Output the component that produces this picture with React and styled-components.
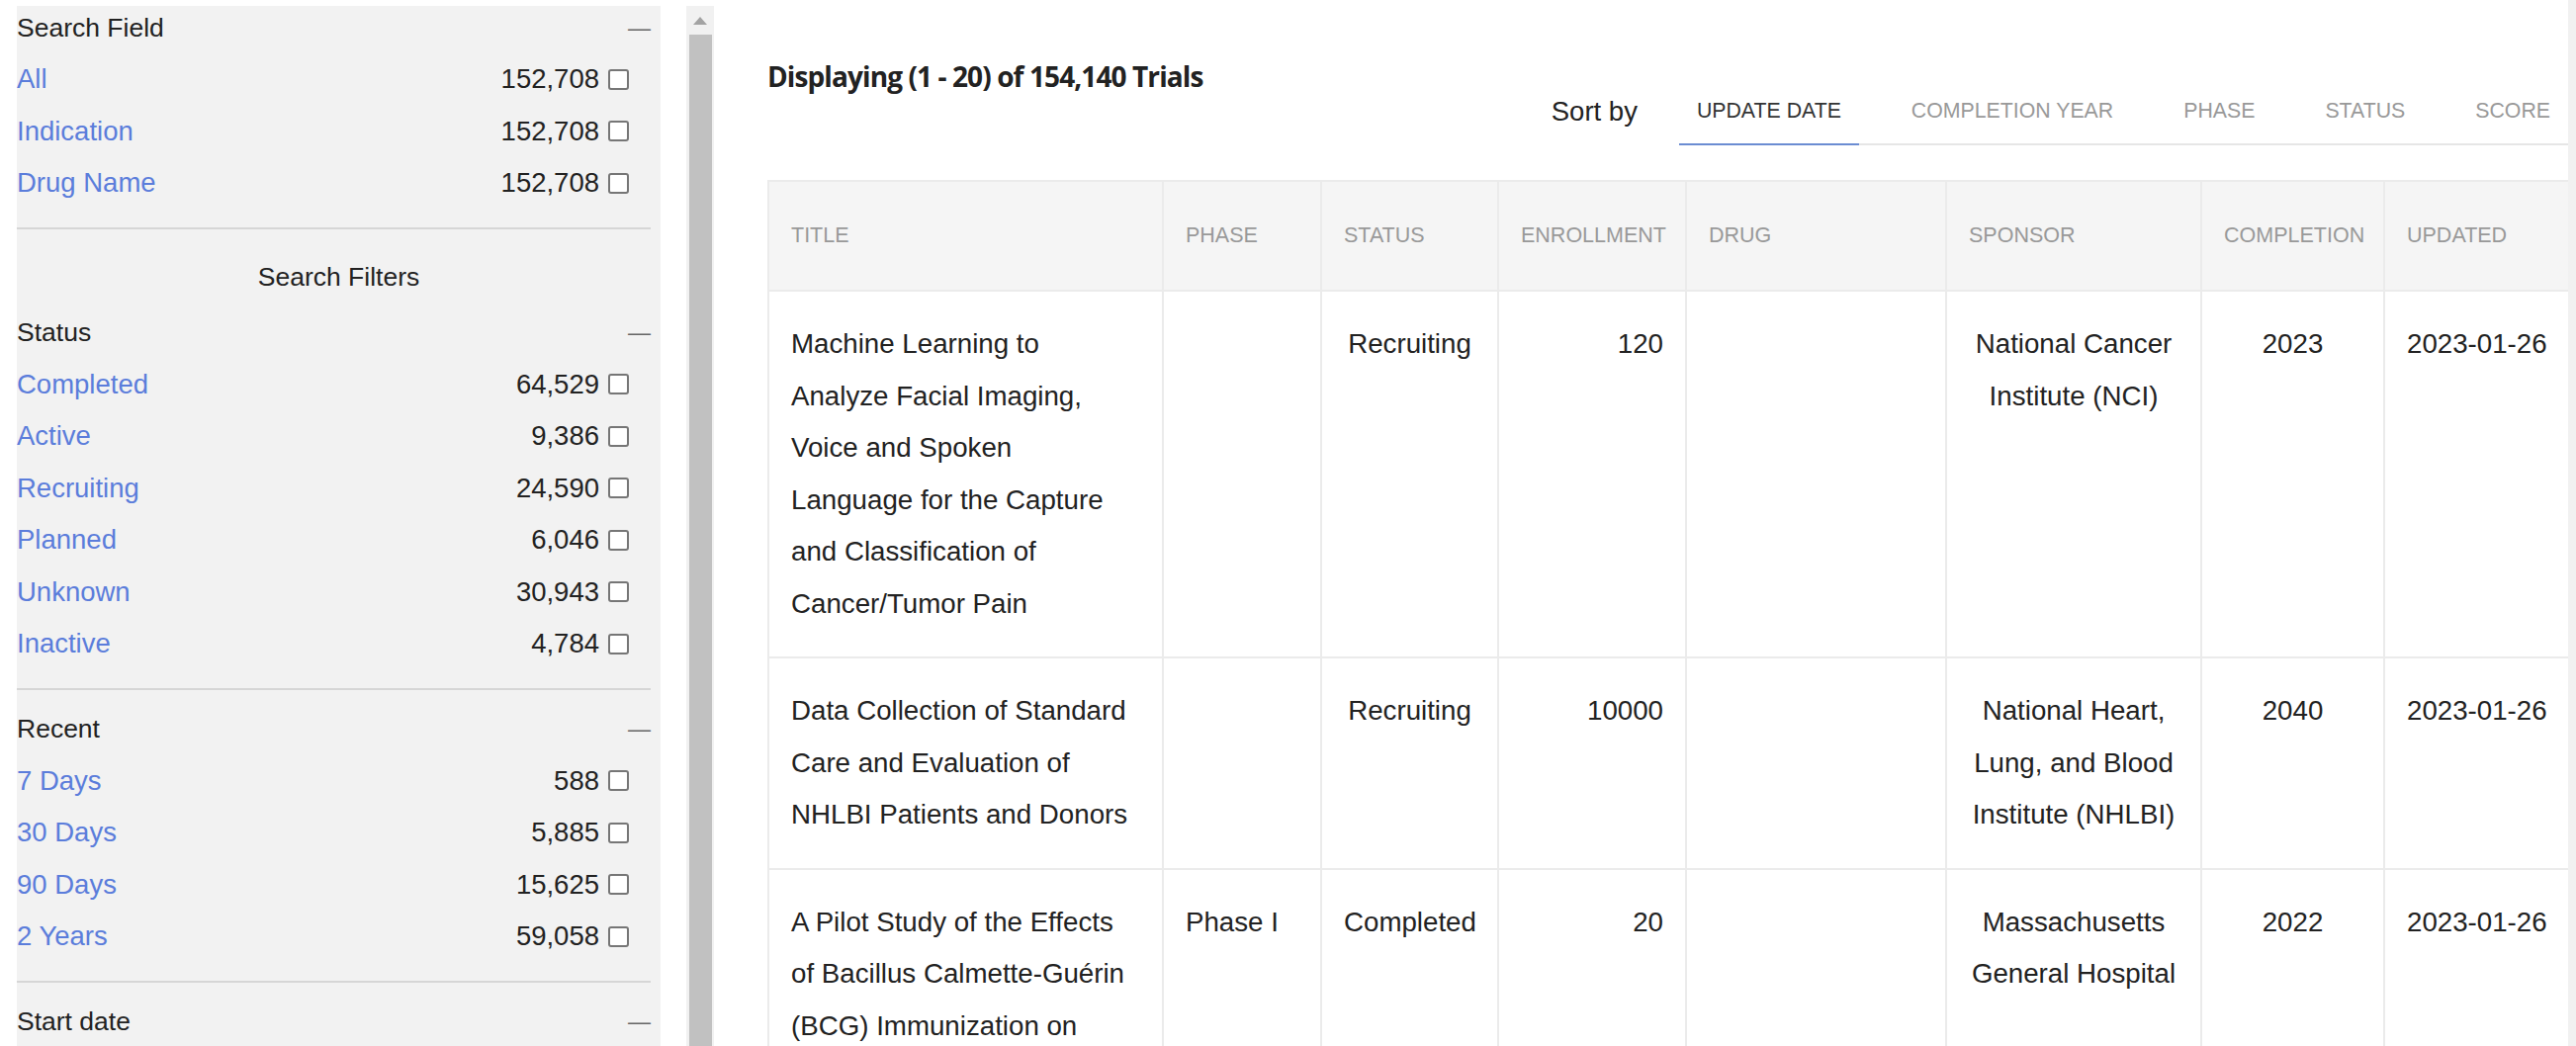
import React from 'react';
import styled, { createGlobalStyle } from 'styled-components';

const Global = createGlobalStyle`
  html, body { margin: 0; padding: 0; overflow: hidden; background: #ffffff; }
  body { font-family: "Liberation Sans", Arial, sans-serif; }
  * { box-sizing: border-box; }
`;

const Page = styled.div`
  display: flex;
  width: 2605px;
  height: 1058px;
  overflow: hidden;
  background: #ffffff;
`;

/* ---------- sidebar ---------- */
const Sidebar = styled.aside`
  flex: 0 0 651px;
  margin: 6px 0 0 17px;
  padding-right: 10px;
  background: #f2f2f2;
  overflow: hidden;
`;

const Section = styled.section`
  padding-top: ${(p) => p.$top}px;
  padding-bottom: ${(p) => (p.$last ? 0 : 18)}px;
  border-bottom: ${(p) => (p.$last ? 'none' : '2px solid #d6d6d6')};
`;

const SectionHeader = styled.div`
  display: flex;
  align-items: center;
  justify-content: space-between;
  height: 48px;
  padding-bottom: 4px;
  font-size: 26.5px;
  color: #222222;
`;

const Collapse = styled.span`
  font-size: 23px;
  line-height: 1;
  color: #666666;
`;

const FiltersTitle = styled.div`
  padding: 31px 0 18px 10px;
  line-height: 34px;
  font-size: 26.5px;
  text-align: center;
  color: #222222;
`;

const FilterRow = styled.div`
  display: flex;
  align-items: center;
  height: 52.5px;
  padding-right: 22px;
  font-size: 27.5px;
`;

const FilterLink = styled.a`
  flex: 1;
  color: #5b7ddb;
  text-decoration: none;
  cursor: pointer;
`;

const Count = styled.span`
  color: #222222;
`;

const Check = styled.input.attrs({ type: 'checkbox' })`
  appearance: none;
  width: 21px;
  height: 21px;
  margin: 0 0 0 9px;
  border: 2px solid #767676;
  border-radius: 3px;
  background: #ffffff;
`;

/* ---------- scrollbar column ---------- */
const ScrollTrack = styled.div`
  flex: 0 0 28px;
  margin: 6px 0 0 26px;
  background: #f1f1f1;
  display: flex;
  flex-direction: column;
  align-items: center;
`;

const ScrollArrow = styled.div`
  height: 29px;
  width: 100%;
  display: flex;
  align-items: center;
  justify-content: center;
`;

const ScrollThumb = styled.div`
  flex: 1;
  width: 23px;
  background: #c1c1c1;
`;

const PageScroll = styled.div`
  flex: 0 0 8px;
  background: #f1f1f1;
`;

/* ---------- main ---------- */
const Main = styled.main`
  flex: 1;
  min-width: 0;
  padding-left: 54px;
  overflow: hidden;
`;

const TopBar = styled.div`
  display: flex;
  align-items: flex-start;
  justify-content: space-between;
  padding-bottom: 35px;
`;

const Heading = styled.h2`
  margin: 57px 0 0;
  font-family: "Open Sans", "Liberation Sans", sans-serif;
  font-weight: 700;
  font-size: 28px;
  line-height: 40px;
  letter-spacing: -0.9px;
  color: #222222;
`;

const SortGroup = styled.div`
  display: flex;
  align-items: flex-start;
  margin-top: 80px;
`;

const SortLabel = styled.span`
  font-size: 27.5px;
  line-height: 65px;
  margin-right: 42px;
  color: #222222;
`;

const TabList = styled.div`
  display: flex;
  gap: 35px;
  border-bottom: 2px solid #e6e6e6;
`;

const Tab = styled.button`
  height: 67px;
  margin-bottom: -2px;
  padding: 0 18px;
  border: none;
  border-bottom: 2px solid ${(p) => (p.$active ? '#6b8cd2' : 'transparent')};
  background: transparent;
  font-family: "Liberation Sans", Arial, sans-serif;
  font-size: 21.3px;
  line-height: 65px;
  text-transform: uppercase;
  white-space: nowrap;
  color: ${(p) => (p.$active ? '#333333' : '#999999')};
  cursor: pointer;
`;

const Table = styled.table`
  width: 1821px;
  border-collapse: collapse;
  table-layout: fixed;
  font-size: 27.7px;
  color: #222222;
`;

const Col = styled.col`
  width: ${(p) => p.$w}px;
`;

const Th = styled.th`
  height: 111px;
  padding: 0 0 0 22px;
  background: #f5f5f5;
  border: 2px solid #ebebeb;
  color: #999999;
  font-weight: 400;
  font-size: 21.5px;
  text-align: left;
  text-transform: uppercase;
  vertical-align: middle;
`;

const Td = styled.td`
  padding: 27px ${(p) => (p.$wide ? 30 : 22)}px 27px 22px;
  border: 2px solid #ebebeb;
  line-height: 52.5px;
  vertical-align: top;
  text-align: ${(p) => p.$align || 'left'};
  white-space: ${(p) => (p.$nowrap ? 'nowrap' : 'normal')};
`;

const columns = [
  { key: 'title', label: 'Title', w: 399 },
  { key: 'phase', label: 'Phase', w: 160 },
  { key: 'status', label: 'Status', w: 179 },
  { key: 'enrollment', label: 'Enrollment', w: 190 },
  { key: 'drug', label: 'Drug', w: 263 },
  { key: 'sponsor', label: 'Sponsor', w: 258 },
  { key: 'completion', label: 'Completion', w: 185 },
  { key: 'updated', label: 'Updated', w: 187 },
];

const trials = [
  {
    title: 'Machine Learning to Analyze Facial Imaging, Voice and Spoken Language for the Capture and Classification of Cancer/Tumor Pain',
    phase: '',
    status: 'Recruiting',
    enrollment: '120',
    drug: '',
    sponsor: 'National Cancer Institute (NCI)',
    completion: '2023',
    updated: '2023-01-26',
  },
  {
    title: 'Data Collection of Standard Care and Evaluation of NHLBI Patients and Donors',
    phase: '',
    status: 'Recruiting',
    enrollment: '10000',
    drug: '',
    sponsor: 'National Heart, Lung, and Blood Institute (NHLBI)',
    completion: '2040',
    updated: '2023-01-26',
  },
  {
    title: 'A Pilot Study of the Effects of Bacillus Calmette-Guérin (BCG) Immunization on',
    phase: 'Phase I',
    status: 'Completed',
    enrollment: '20',
    drug: '',
    sponsor: 'Massachusetts General Hospital',
    completion: '2022',
    updated: '2023-01-26',
  },
];

const filterSections = [
  {
    title: 'Status',
    items: [
      ['Completed', '64,529'],
      ['Active', '9,386'],
      ['Recruiting', '24,590'],
      ['Planned', '6,046'],
      ['Unknown', '30,943'],
      ['Inactive', '4,784'],
    ],
  },
  {
    title: 'Recent',
    items: [
      ['7 Days', '588'],
      ['30 Days', '5,885'],
      ['90 Days', '15,625'],
      ['2 Years', '59,058'],
    ],
  },
  { title: 'Start date', items: [], last: true },
];

const tabs = ['Update Date', 'Completion Year', 'Phase', 'Status', 'Score'];

const align = {
  status: 'center',
  enrollment: 'right',
  sponsor: 'center',
  completion: 'center',
  updated: 'center',
};

function Filter({ label, count }) {
  return (
    <FilterRow>
      <FilterLink>{label}</FilterLink>
      <Count>{count}</Count>
      <Check />
    </FilterRow>
  );
}

function FilterSection({ title, items, top, last }) {
  return (
    <Section $top={top} $last={last}>
      <SectionHeader>
        <span>{title}</span>
        <Collapse>—</Collapse>
      </SectionHeader>
      {items.map(([l, c]) => (
        <Filter key={l} label={l} count={c} />
      ))}
    </Section>
  );
}

export default function App() {
  return (
    <>
      <Global />
      <Page>
        <Sidebar>
          <FilterSection
            title="Search Field"
            top={0}
            items={[
              ['All', '152,708'],
              ['Indication', '152,708'],
              ['Drug Name', '152,708'],
            ]}
          />
          <FiltersTitle>Search Filters</FiltersTitle>
          {filterSections.map((s, i) => (
            <FilterSection key={s.title} title={s.title} items={s.items} top={i === 0 ? 0 : 18} last={s.last} />
          ))}
        </Sidebar>

        <ScrollTrack>
          <ScrollArrow>
            <svg width="14" height="8" viewBox="0 0 14 8">
              <path d="M7 0 L14 8 L0 8 Z" fill="#a3a3a3" />
            </svg>
          </ScrollArrow>
          <ScrollThumb />
        </ScrollTrack>

        <Main>
          <TopBar>
            <Heading>Displaying (1 - 20) of 154,140 Trials</Heading>
            <SortGroup>
              <SortLabel>Sort by</SortLabel>
              <TabList>
                {tabs.map((t, i) => (
                  <Tab key={t} $active={i === 0}>
                    {t}
                  </Tab>
                ))}
              </TabList>
            </SortGroup>
          </TopBar>

          <Table>
            <colgroup>
              {columns.map((c) => (
                <Col key={c.key} $w={c.w} />
              ))}
            </colgroup>
            <thead>
              <tr>
                {columns.map((c) => (
                  <Th key={c.key}>{c.label}</Th>
                ))}
              </tr>
            </thead>
            <tbody>
              {trials.map((t, r) => (
                <tr key={r}>
                  {columns.map((c) => (
                    <Td
                      key={c.key}
                      $align={align[c.key]}
                      $wide={c.key === 'title'}
                      $nowrap={c.key === 'updated' || c.key === 'completion'}
                    >
                      {t[c.key]}
                    </Td>
                  ))}
                </tr>
              ))}
            </tbody>
          </Table>
        </Main>

        <PageScroll />
      </Page>
    </>
  );
}
